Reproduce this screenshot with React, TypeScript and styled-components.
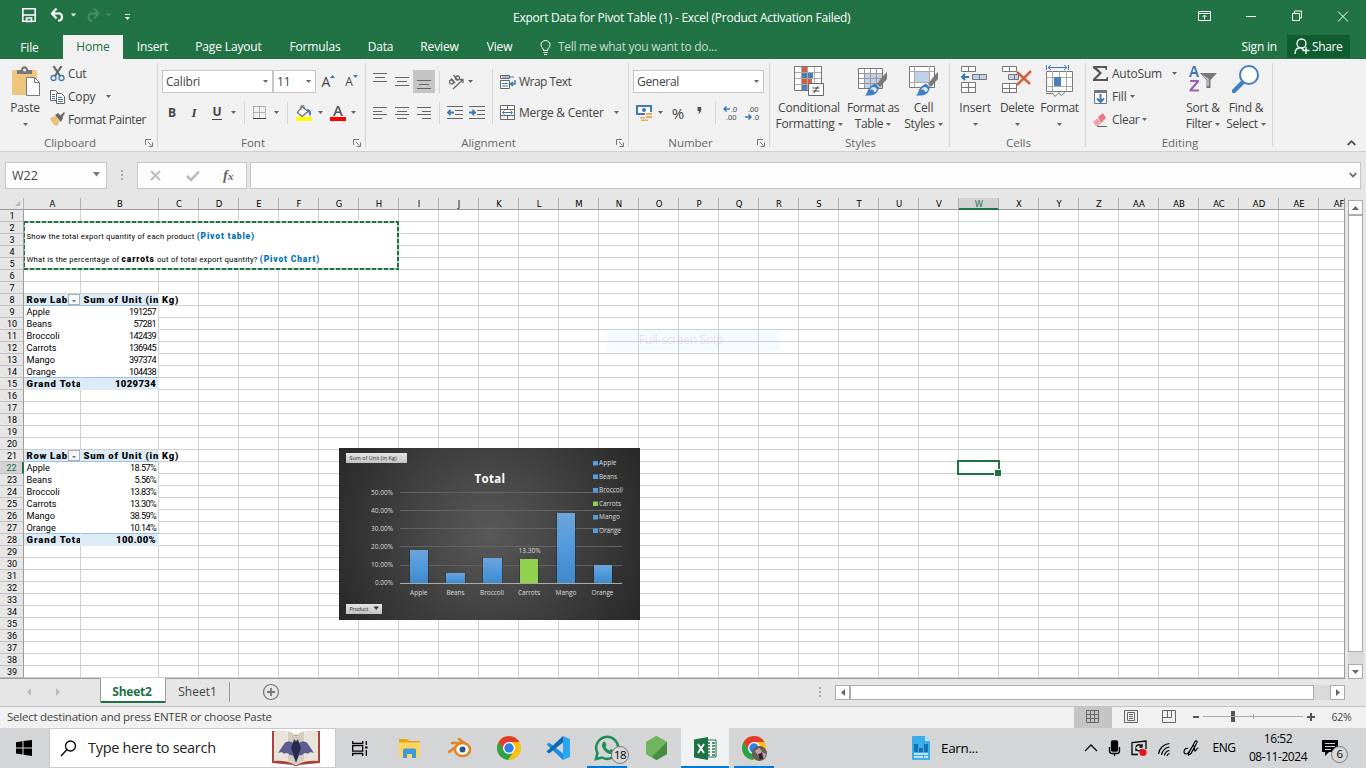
import React from "react";
import styled, { createGlobalStyle, css } from "styled-components";

const UI = '"Open Sans", "Noto Sans", sans-serif';
const CELL = 'Roboto, "Liberation Sans", sans-serif';

const GlobalStyle = createGlobalStyle`
  * { box-sizing: border-box; }
  body { margin: 0; background: #e6e6e6; font-family: ${UI}; font-size: 12px; color: #444; overflow: hidden; }
  svg { display: block; flex: none; }
`;

const Window = styled.div`
  width: 1366px;
  height: 768px;
  display: flex;
  flex-direction: column;
  overflow: hidden;
`;

const Label = styled.span<{ $l?: number; $ls?: number; $size?: number; $color?: string; $bold?: boolean; $lh?: number }>`
  margin-left: ${(p) => p.$l ?? 0}px;
  letter-spacing: ${(p) => p.$ls ?? -0.2}px;
  font-size: ${(p) => p.$size ?? 12}px;
  font-weight: ${(p) => (p.$bold ? 700 : 400)};
  ${(p) => p.$color && css`color: ${p.$color};`}
  white-space: nowrap;
  line-height: ${(p) => p.$lh ?? 16}px;
`;

const Slot = styled.div<{ $w: number; $h?: number; $l?: number; $active?: boolean }>`
  display: flex;
  flex: none;
  align-items: center;
  justify-content: center;
  width: ${(p) => p.$w}px;
  height: ${(p) => p.$h ?? 22}px;
  margin-left: ${(p) => p.$l ?? 0}px;
  background: ${(p) => (p.$active ? "#c5c5c5" : "transparent")};
`;

const Caret = ({ c = "#666" }: { c?: string }) => (
  <svg width="5" height="3"><path d="M0 0h5L2.5 3z" fill={c} /></svg>
);

/* ---------- title bar and tabs ---------- */

const TitleBar = styled.header`
  display: flex;
  align-items: center;
  height: 35px;
  flex: none;
  padding-left: 22px;
  background: #217346;
  color: #fff;
`;
const TitleText = styled.div`
  flex: 1;
  padding: 0 0 0 381px;
  font-size: 12px;
  line-height: 16px;
  letter-spacing: -0.25px;
  white-space: nowrap;
`;
const Tabs = styled.nav`
  display: flex;
  height: 24px;
  flex: none;
  background: #217346;
  color: #fff;
`;
const Tab = styled.div<{ $w: number; $on?: boolean; $low?: boolean }>`
  width: ${(p) => p.$w}px;
  height: 24px;
  line-height: ${(p) => (p.$low ? 26 : 24)}px;
  text-align: center;
  white-space: nowrap;
  letter-spacing: -0.15px;
  background: ${(p) => (p.$on ? "#f1f1f1" : "transparent")};
  color: ${(p) => (p.$on ? "#217346" : "#fff")};
`;
const TellMe = styled.div`
  display: flex;
  align-items: center;
  flex: 1;
  padding-left: 14px;
  color: #c5dccf;
`;
const ShareButton = styled.div`
  display: flex;
  align-items: center;
  width: 63px;
  height: 23px;
  margin: 0 16px 0 10px;
  padding-left: 7px;
  gap: 2px;
  background: #0e5c2f;
`;

const Title = () => (
  <TitleBar>
    <svg width="110" height="20" viewBox="22 8 110 20" fill="none">
      <path d="M22.8 8.8h12.4v12.4H22.8z" stroke="#fff" strokeWidth="1.6" />
      <path d="M23 15h12M26.5 18h5v3.500h-5z" stroke="#fff" strokeWidth="1.6" />
      <path d="M56.500 8.500l-4.500 5 4.500 5M53 13.500h7a4 4 0 0 1 0 7h-2" stroke="#fff" strokeWidth="2.200" />
      <path d="M71 13.500h5l-2.500 3z" fill="#fff" />
      <g stroke="#4b8e69"><path d="M94 8.500l4.500 5-4.500 5M98 13.500h-7.500a4 4 0 0 0 0 7h2" strokeWidth="1.800" /></g>
      <path d="M106 13.500h5l-2.500 3z" fill="#4b8e69" />
      <path d="M125 14.500h5" stroke="#fff" />
      <path d="M125 17h5l-2.500 3z" fill="#fff" />
    </svg>
    <TitleText>Export Data for Pivot Table (1) - Excel (Product Activation Failed)</TitleText>
    <svg width="168" height="20" viewBox="1198 5 168 20" fill="none" stroke="#fff">
      <path d="M1198.500 8.500h12v9h-12zM1198.500 10.500h12M1204.500 16.500v-4M1202.500 14l2-2 2 2" />
      <path d="M1246 13.500h10" />
      <path d="M1292.500 10.500h7v7h-7zM1294.500 10v-2h7v7h-2" />
      <path d="M1338 8.500l10 10M1348 8.500l-10 10" />
    </svg>
  </TitleBar>
);

const TabRow = () => (
  <Tabs>
    <Tab $w={59} $low>File</Tab>
    <Slot $w={4} />
    <Tab $w={60} $on>Home</Tab>
    <Tab $w={59}>Insert</Tab>
    <Tab $w={93}>Page Layout</Tab>
    <Tab $w={80}>Formulas</Tab>
    <Tab $w={51}>Data</Tab>
    <Tab $w={67}>Review</Tab>
    <Tab $w={53}>View</Tab>
    <TellMe>
      <svg width="11" height="15" fill="none" stroke="#fff"><path d="M3.500 10.500C3.500 8 1 7.500 1 4.800a4.500 4.300 0 0 1 9 0C10 7.500 7.500 8 7.500 10.500zM3.500 12.500h4M4 14.500h3" /></svg>
      <Label $l={7} $ls={-0.28}>Tell me what you want to do...</Label>
    </TellMe>
    <Label $lh={24} $ls={-0.2}>Sign in</Label>
    <ShareButton>
      <svg width="16" height="17" fill="none" stroke="#fff" strokeWidth="1.300"><circle cx="7.500" cy="5.500" r="4.500" /><path d="M1 16c0-3.500 2-6 5-6.500M7 10l3 2M8.500 12.500h7M12 9v7" /></svg>
      <Label $ls={-0.4}>Share</Label>
    </ShareButton>
  </Tabs>
);

/* ---------- ribbon ---------- */

const RibbonBar = styled.div`
  display: flex;
  position: relative;
  height: 93px;
  flex: none;
  padding: 4px 0;
  background: #f1f1f1;
  border-bottom: 1px solid #d2d0ce;
`;
const Group = styled.section<{ $w: number }>`
  display: flex;
  flex-direction: column;
  width: ${(p) => p.$w}px;
  height: 84px;
  flex: none;
  border-right: 1px solid #d4d4d4;
`;
const GroupBody = styled.div`
  display: flex;
  height: 71px;
  flex: none;
`;
const GroupFooter = styled.div`
  display: flex;
  align-items: center;
  height: 18px;
  padding-right: 4px;
  color: #666;
`;
const GroupName = styled.span<{ $launch: boolean }>`
  flex: 1;
  padding-right: ${(p) => (p.$launch ? 5 : 0)}px;
  padding-left: ${(p) => (p.$launch ? 0 : 6)}px;
  text-align: center;
  font-size: 11.500px;
  line-height: 17px;
`;
const Column = styled.div<{ $l?: number; $t?: number; $w?: number }>`
  display: flex;
  flex-direction: column;
  margin-left: ${(p) => p.$l ?? 0}px;
  margin-top: ${(p) => p.$t ?? 0}px;
  ${(p) => p.$w && css`width: ${p.$w}px;`}
`;
const Line = styled.div<{ $h?: number; $t?: number }>`
  display: flex;
  align-items: center;
  height: ${(p) => p.$h ?? 23}px;
  margin-top: ${(p) => p.$t ?? 0}px;
  white-space: nowrap;
`;
const BigButton = styled.div<{ $w: number; $l?: number }>`
  display: flex;
  flex-direction: column;
  align-items: center;
  width: ${(p) => p.$w}px;
  margin-left: ${(p) => p.$l ?? 0}px;
  flex: none;
  line-height: 16px;
  letter-spacing: -0.200px;
  white-space: nowrap;
`;
const BigIcon = styled.div`
  height: 37px;
  padding-top: 2px;
`;
const BigLine = styled.div<{ $ls?: number }>`
  display: flex;
  align-items: center;
  gap: 3px;
  height: 16px;
  ${(p) => p.$ls !== undefined && css`letter-spacing: ${p.$ls}px;`}
`;
const Combo = styled.div<{ $w: number }>`
  display: flex;
  align-items: center;
  justify-content: space-between;
  width: ${(p) => p.$w}px;
  height: 23px;
  padding: 0 4px 0 3px;
  background: #fff;
  border: 1px solid #c6c6c6;
  flex: none;
`;
const Sep = styled.div<{ $h?: number; $l?: number }>`
  width: 1px;
  height: ${(p) => p.$h ?? 22}px;
  margin-left: ${(p) => p.$l ?? 0}px;
  background: #d4d4d4;
  flex: none;
`;
const Collapse = styled.div`
  position: absolute;
  right: 10px;
  bottom: 5px;
`;
const Glyph = styled.span<{ $b?: boolean; $i?: boolean; $u?: boolean; $size?: number }>`
  font-size: ${(p) => p.$size ?? 12}px;
  line-height: 14px;
  font-weight: ${(p) => (p.$b ? 700 : 400)};
  font-style: ${(p) => (p.$i ? "italic" : "normal")};
  font-family: ${(p) => (p.$i ? '"Liberation Serif", serif' : UI)};
  ${(p) => p.$u && css`border-bottom: 1px solid #444;`}
`;

const Footer = ({ name, launch = true }: { name: string; launch?: boolean }) => (
  <GroupFooter>
    <GroupName $launch={launch}>{name}</GroupName>
    {launch && (
      <svg width="8" height="8" fill="none" stroke="#777"><path d="M.5 6V.5H6M3 3l3.500 3.500M7.500 3.500v4h-4" /></svg>
    )}
  </GroupFooter>
);

const Bars = ({ xs, ys, h }: { xs: [number, number][]; ys: number[]; h: number }) => (
  <svg width="14" height={h} stroke="#666">{ys.map((y, i) => <path key={i} d={`M${xs[i][0]} ${y}.5H${xs[i][1]}`} />)}</svg>
);

const IndentIcon = ({ right }: { right?: boolean }) => (
  <svg width="16" height="14" stroke="#666" fill="none">
    <path d="M0 .5h16M8 4.500h8M8 8.500h8M0 12.500h16" />
    <path d={right ? "M0 6.500h6M3.500 4l2.500 2.500L3.500 9" : "M7 6.500H1M3.500 4L1 6.500 3.500 9"} stroke="#3f78b5" strokeWidth="1.800" />
  </svg>
);

const BrushOverlay = () => (
  <>
    <path d="M29 7v7l-7 8-3-3 6-8z" fill="#7a7a7a" />
    <path d="M17 18.500l4 4-1.500 4c-3 4.500-8 4-13 4 3-1.500 2.500-4 4-6.500 1.500-3 4-4 6.500-5.500z" fill="#3f7fbf" />
    <path d="M12 25c1-3 4-4 6-2s0 4-2 4c0-2-2-3-4-2z" fill="#dce8f4" />
  </>
);

const Clipboard = () => (
  <Group $w={158}>
    <GroupBody>
      <BigButton $w={40} $l={5}>
        <BigIcon>
          <svg width="30" height="33" viewBox="-2 -1 30 33">
            <path d="M2 4h21a2 2 0 0 1 2 2v23H2a2 2 0 0 1-2-2V6a2 2 0 0 1 2-2z" fill="#edc57c" />
            <path d="M5 8V4h4c0-5 7-5 7 0h4v4z" fill="#777" /><circle cx="12.500" cy="4" r="1.500" fill="#f1f1f1" />
            <path d="M14.500 11.500h8l5 5v13h-13z" fill="#fff" stroke="#777" /><path d="M22.500 11.500v5h5" fill="none" stroke="#777" />
          </svg>
        </BigIcon>
        <BigLine>Paste</BigLine>
        <BigLine><Caret /></BigLine>
      </BigButton>
      <Column $l={5} $t={-1}>
        <Line>
          <svg width="15" height="16" fill="none"><path d="M3.500 0l6.500 10M11.500 0L5 10" stroke="#666" strokeWidth="2.200" /><circle cx="3.500" cy="12" r="2.500" stroke="#3f78b5" strokeWidth="1.300" /><circle cx="11.500" cy="12" r="2.500" stroke="#3f78b5" strokeWidth="1.300" /></svg>
          <Label $l={3} $ls={-0.3}>Cut</Label>
        </Line>
        <Line>
          <svg width="15" height="14" fill="#fff" stroke="#666"><path d="M.5.500h5l3 3v7h-8z" /><path d="M6.500 3.500h5l3 3v7h-8z" /><path d="M2 4.500h3M2 6.500h3M2 8.500h3M8 7.500h4M8 9.500h5M8 11.500h5" stroke="#3f78b5" /></svg>
          <Label $l={3}>Copy</Label><Slot $w={5} $l={11}><Caret /></Slot>
        </Line>
        <Line>
          <svg width="15" height="15"><path d="M0 6l5-2 5 5-3 5C4 13 1 10 0 6z" fill="#edbf77" /><path d="M5 3l3-2 5 5-2 4z" fill="#666" /><path d="M10 4l4-4 1 1-3 5z" fill="#666" /></svg>
          <Label $l={3} $ls={-0.4}>Format Painter</Label>
        </Line>
      </Column>
    </GroupBody>
    <Footer name="Clipboard" />
  </Group>
);

const FontGroup = () => (
  <Group $w={208}>
    <GroupBody>
      <Column $l={4} $t={7}>
        <Line>
          <Combo $w={111}><Label>Calibri</Label><Caret /></Combo>
          <Combo $w={43}><Label>11</Label><Caret /></Combo>
          <Slot $w={20} $l={3}><Glyph $size={14}>A</Glyph><svg width="6" height="16"><path d="M0 4h5L2.500 1z" fill="#3f78b5" /></svg></Slot>
          <Slot $w={20} $l={3}><Glyph $size={12}>A</Glyph><svg width="6" height="16"><path d="M0 1h5L2.500 4z" fill="#3f78b5" /></svg></Slot>
        </Line>
        <Line $t={8}>
          <Slot $w={20}><Glyph $b>B</Glyph></Slot>
          <Slot $w={24}><Glyph $b $i $size={13}>I</Glyph></Slot>
          <Slot $w={22}><Glyph $b $u>U</Glyph></Slot>
          <Slot $w={10}><Caret /></Slot>
          <Sep $l={6} />
          <Slot $w={13} $l={8}><svg width="13" height="14" stroke="#777" fill="none"><path d="M.5.500h12v12M.500.500v12M6.500.500v12M.5 6.500h12" strokeDasharray="1 1" /><path d="M0 12.500h13" stroke="#444" /></svg></Slot>
          <Slot $w={20}><Caret /></Slot>
          <Sep $l={1} />
          <Slot $w={16} $l={8}><svg width="16" height="16"><path d="M6 1.500l6 5-6 5-4.500-4z" fill="#fff" stroke="#666" strokeWidth="1.200" /><path d="M5 5V1.500a1.500 1.500 0 0 1 3 0V4" fill="none" stroke="#666" /><path d="M11 4c4 0 5 4 3 7.500-1-2-1-4-3-7.500z" fill="#3f78b5" /><path d="M0 12h16v4H0z" fill="#ff0" /></svg></Slot>
          <Slot $w={16}><Caret /></Slot>
          <Slot $w={16} $l={2}><svg width="16" height="16"><path d="M3 11L7 1h2l4 10h-2l-1-3H6l-1 3zM6.500 6.500h3L8 2.500z" fill="#555" /><path d="M0 12h16v4H0z" fill="red" /></svg></Slot>
          <Slot $w={15}><Caret /></Slot>
        </Line>
      </Column>
    </GroupBody>
    <Footer name="Font" />
  </Group>
);

const AlignmentGroup = () => (
  <Group $w={263}>
    <GroupBody>
      <Column $l={3} $t={7}>
        <Line>
          <Slot $w={22}><Bars h={18} ys={[0, 4, 8]} xs={[[0, 14], [2, 12], [0, 14]]} /></Slot>
          <Slot $w={22}><Bars h={14} ys={[2, 6, 10]} xs={[[0, 14], [2, 12], [0, 14]]} /></Slot>
          <Slot $w={22} $h={23} $active><Bars h={14} ys={[5, 9, 13]} xs={[[0, 14], [2, 12], [0, 14]]} /></Slot>
          <Sep $l={4} />
          <Slot $w={16} $l={8}><svg width="17" height="16" stroke="#666" fill="none" strokeWidth="1.300"><circle cx="3.500" cy="8" r="2" /><path d="M3 4.500l4 4.500M5.500 1l4 5" /><circle cx="9.500" cy="4" r="2" /><path d="M5 15L15 5.500M11.500 5.500H15v3.500" /></svg></Slot>
          <Slot $w={12}><Caret /></Slot>
          <Slot $w={2} />
        </Line>
        <Line $t={8}>
          <Slot $w={22}><Bars h={12} ys={[0, 4, 7, 11]} xs={[[0, 14], [0, 9], [0, 14], [0, 9]]} /></Slot>
          <Slot $w={22}><Bars h={12} ys={[0, 4, 7, 11]} xs={[[0, 14], [2, 12], [0, 14], [2, 12]]} /></Slot>
          <Slot $w={22}><Bars h={12} ys={[0, 4, 7, 11]} xs={[[0, 14], [5, 14], [0, 14], [5, 14]]} /></Slot>
          <Sep $l={4} />
          <Slot $w={16} $l={7}><IndentIcon /></Slot>
          <Slot $w={16} $l={6}><IndentIcon right /></Slot>
        </Line>
      </Column>
      <Column $l={7} $t={6}><Sep $h={55} /></Column>
      <Column $l={7} $t={7}>
        <Line>
          <svg width="16" height="16" fill="#fff" stroke="#666"><path d="M.5 1.500h9v3h-9zM.5 6.500h9v8h-9z" /><path d="M2 3h12M2 9.500h6M2 12h6" stroke="#3f78b5" /><path d="M15 6v4h-4M13 8l-2.500 2 2.500 2" stroke="#3f78b5" fill="none" strokeWidth="1.500" /></svg>
          <Label $l={3} $ls={-0.52}>Wrap Text</Label>
        </Line>
        <Line $t={8}>
          <svg width="15" height="15" fill="#fff" stroke="#666"><path d="M.5.500h14v14H.500zM7.500.500v4M7.500 11v4M.5 4.500h14M.5 10.500h14" /><path d="M2.500 7.500h10M4.500 5.500l-2 2 2 2M10.500 5.500l2 2-2 2" stroke="#3f78b5" fill="none" /></svg>
          <Label $l={4} $ls={-0.25}>Merge &amp; Center</Label><Slot $w={5} $l={10}><Caret /></Slot>
        </Line>
      </Column>
    </GroupBody>
    <Footer name="Alignment" />
  </Group>
);

const DecimalIcon = ({ more }: { more?: boolean }) => (
  <svg width="16" height="16" fill="#444" fontFamily="Liberation Sans" fontSize="7.500">
    <text x={more ? 8 : 3} y="6.500">{more ? ".0" : ".00"}</text>
    <text x={more ? 3 : 8} y="15">{more ? ".00" : ".0"}</text>
    <path d={more ? "M7 4H1M3.500 1.500L1 4l2.500 2.500" : "M0 12h6M3.500 9.500L6 12l-2.500 2.500"} stroke="#3f78b5" strokeWidth="1.500" fill="none" />
  </svg>
);

const NumberGroup = () => (
  <Group $w={141}>
    <GroupBody>
      <Column $l={4} $t={7}>
        <Line><Combo $w={131}><Label $ls={-0.3}>General</Label><Caret /></Combo></Line>
        <Line $t={8}>
          <Slot $w={16} $l={3}><svg width="16" height="16"><path d="M1 1h14v8H1z" fill="#fff" stroke="#3f78b5" strokeWidth="2" /><circle cx="8" cy="5" r="2" fill="#3f78b5" /><path d="M9 7h7v9H8v-2H4v-3h5z" fill="#f1f1f1" /><path d="M10 8h6v2h-6zM10 11h6v2h-6zM4 12h5v1.500H4zM5 14.500h7V16H5z" fill="#e8ae5d" /></svg></Slot>
          <Slot $w={16}><Caret /></Slot>
          <Slot $w={20}><Glyph $size={15}>%</Glyph></Slot>
          <Slot $w={20} $l={1}><svg width="5" height="11"><path d="M.5 0h3.500c1 3 0 6-3 7.500C2 6 2 5 2 4H.500z" fill="#555" /></svg></Slot>
          <Sep $l={6} />
          <Slot $w={16} $l={7}><DecimalIcon more /></Slot>
          <Slot $w={16} $l={6}><DecimalIcon /></Slot>
        </Line>
      </Column>
    </GroupBody>
    <Footer name="Number" />
  </Group>
);

const StylesGroup = () => (
  <Group $w={180}>
    <GroupBody>
      <BigButton $w={72} $l={3}>
        <BigIcon>
          <svg width="30" height="31" fill="none"><path d="M.5 1.500h27v24H.500z" fill="#fff" /><path d="M8 1h6v6H8zM8 14h10v5H8z" fill="#d65f3e" /><path d="M8 7h11v6H8zM8 20h5v5H8z" fill="#4a80ba" /><path d="M.5 7.500h27M.5 13.500h27M.5 19.500h27M7.500 1v24M13.500 1v24M20.500 1v24" stroke="#aaa" /><path d="M.5 1.500h27v24H.500z" stroke="#777" /><path d="M14.500 18.500h15v12h-15z" fill="#fff" stroke="#666" /><path d="M18.500 23h7M18.500 26h7M24 21l-4 7" stroke="#444" /></svg>
        </BigIcon>
        <BigLine>Conditional</BigLine>
        <BigLine $ls={-0.25}>Formatting<Caret /></BigLine>
      </BigButton>
      <BigButton $w={56}>
        <BigIcon>
          <svg width="30" height="31" viewBox="0 0 30 31" fill="none"><path d="M.5 3.500h24v20H.500z" fill="#fff" /><path d="M7 8h17v15H7z" fill="#bed1e8" /><path d="M.5 8.500h24M.5 13.500h24M.5 18.500h24M6.500 3v20M12.500 3v20M18.500 3v20" stroke="#999" /><path d="M.5 3.500h24v20H.500z" stroke="#777" /><BrushOverlay /></svg>
        </BigIcon>
        <BigLine $ls={-0.42}>Format as</BigLine>
        <BigLine $ls={-0.4}>Table<Caret /></BigLine>
      </BigButton>
      <BigButton $w={45}>
        <BigIcon>
          <svg width="30" height="31" viewBox="0 0 30 31" fill="none"><path d="M.5 1.500h25v21H.500z" fill="#fff" stroke="#777" /><path d="M.5 6.500h25M.5 17.500h25M5.500 1v21M20.500 1v21" stroke="#aaa" /><path d="M6 7h14v10H6z" fill="#bed1e8" /><BrushOverlay /></svg>
        </BigIcon>
        <BigLine>Cell</BigLine>
        <BigLine $ls={-0.35}>Styles<Caret /></BigLine>
      </BigButton>
    </GroupBody>
    <Footer name="Styles" launch={false} />
  </Group>
);

const CellsGroup = () => (
  <Group $w={136}>
    <GroupBody>
      <BigButton $w={42} $l={4}>
        <BigIcon><svg width="28" height="29" fill="#fff" stroke="#777"><path d="M.500 1.500h14v5h-14zM7.500 1v6M.500 17.500h14v10h-14zM7.500 17v11M.500 22.500h14" /><path d="M11.500 9.500h14v5h-14zM18.500 9v6" fill="#bed1e8" /><path d="M8 12H1M4 9l-3 3 3 3" fill="none" stroke="#3f78b5" strokeWidth="2" /></svg></BigIcon>
        <BigLine $ls={-0.1}>Insert</BigLine><BigLine><Caret /></BigLine>
      </BigButton>
      <BigButton $w={42}>
        <BigIcon><svg width="30" height="29" fill="#fff" stroke="#777"><path d="M.5 1.500h14v5h-14zM7.500 1v6M.5 18.500h14v9h-14zM7.500 18v10M.5 23.500h14" /><path d="M6.500 9.500h10v5h-10zM12.500 9v6" fill="#bed1e8" /><path d="M15 7l13 12M29 6L15 20" fill="none" stroke="#d65f3e" strokeWidth="2.500" /></svg></BigIcon>
        <BigLine $ls={-0.35}>Delete</BigLine><BigLine><Caret /></BigLine>
      </BigButton>
      <BigButton $w={43}>
        <BigIcon><svg width="29" height="32" fill="#fff" stroke="#777"><path d="M1.500 6.500h26v20h-26z" /><path d="M7.500 6v20M21.500 6v20M1.500 12.500h26M1.500 21.500h26M14.500 6v6" stroke="#aaa" /><path d="M9 12h7v9H9z" fill="#4a80ba" stroke="none" /><path d="M1 28.500h7l2 3 4-4 2 3 4-3" /><path d="M1.500 0v5M23.500 0v5M3 2.500h19M6 0L3 2.500 6 5M19 0l3 2.500L19 5" stroke="#3f78b5" fill="none" /></svg></BigIcon>
        <BigLine $ls={-0.35}>Format</BigLine><BigLine><Caret /></BigLine>
      </BigButton>
    </GroupBody>
    <Footer name="Cells" launch={false} />
  </Group>
);

const EditingGroup = () => (
  <Group $w={187}>
    <GroupBody>
      <Column $l={7} $t={-1} $w={86}>
        <Line><svg width="15" height="15"><path d="M0 0h14v4h-1l-1-2H4l5 5-6 6h10l1-2h1v4H0v-2l6-6-6-5z" fill="#555" /></svg><Label $l={4} $ls={-0.22}>AutoSum</Label><Slot $w={5} $l={10}><Caret /></Slot></Line>
        <Line><svg width="15" height="16"><path d="M1.500 1.500h12v13h-12z" fill="#fff" stroke="#777" /><path d="M1 1h13v3H1z" fill="#777" /><path d="M7.500 5v8M4 9.500L7.500 13 11 9.500" fill="none" stroke="#3f78b5" strokeWidth="2" /></svg><Label $l={4}>Fill</Label><Slot $w={5} $l={4}><Caret /></Slot></Line>
        <Line><svg width="15" height="14"><path d="M5 4l5-4 3 5-5 5z" fill="#e8788a" /><path d="M4.500 5L0 9l3 4h2l3-3z" fill="#f0a3ae" /><path d="M4 13.500h10" stroke="#666" /></svg><Label $l={4} $ls={-0.3}>Clear</Label><Slot $w={5} $l={3}><Caret /></Slot></Line>
      </Column>
      <BigButton $w={44} $l={2}>
        <BigIcon><svg width="30" height="29"><path d="M1 12L5 1h2.500L11 12H9L8 9H4l-1 3zM4.500 7h3L6 2.800z" fill="#3f78b5" /><path d="M2 15h9v2l-6.500 7.500H11v2H1.500v-2L8 17H2z" fill="#9a63b8" /><path d="M12 8h17l-6.500 7v8h-4v-8z" fill="#777" /><path d="M14 9.500l5.500 5V21h1v-7z" fill="#eee" /></svg></BigIcon>
        <BigLine>Sort &amp;</BigLine><BigLine $ls={-0.3}>Filter<Caret /></BigLine>
      </BigButton>
      <BigButton $w={42}>
        <BigIcon><svg width="28" height="28"><path d="M2 26l9-9" stroke="#3f7fbf" strokeWidth="4.500" strokeLinecap="round" /><circle cx="17" cy="10" r="9" fill="#fff" stroke="#3f7fbf" strokeWidth="2" /></svg></BigIcon>
        <BigLine>Find &amp;</BigLine><BigLine $ls={-0.3}>Select<Caret /></BigLine>
      </BigButton>
    </GroupBody>
    <Footer name="Editing" launch={false} />
  </Group>
);

/* ---------- formula bar ---------- */

const FormulaBar = styled.div`
  display: flex;
  height: 46px;
  flex: none;
  padding: 10px 5px 9px;
`;
const Field = styled.div<{ $w?: number; $l?: number; $r?: number }>`
  display: flex;
  align-items: center;
  justify-content: space-between;
  ${(p) => (p.$w ? css`width: ${p.$w}px;` : css`flex: 1;`)}
  height: 27px;
  margin-left: ${(p) => p.$l ?? 0}px;
  padding: 0 ${(p) => p.$r ?? 6}px 0 6px;
  background: #fdfdfd;
  border: 1px solid #c6c6c6;
`;

/* ---------- worksheet ---------- */

const SheetArea = styled.div`
  display: flex;
  height: 481px;
  flex: none;
`;
const Sheet = styled.div`
  position: relative;
  width: 1345px;
  height: 481px;
  overflow: hidden;
  border-right: 1px solid #9b9b9b;
  border-bottom: 1px solid #9b9b9b;
  font-family: ${CELL};
  color: #000;
`;
const SheetRow = styled.div`
  display: flex;
  height: 12px;
  width: 1400px;
`;
const Corner = styled.div`
  width: 24px;
  flex: none;
  display: flex;
  align-items: flex-end;
  justify-content: flex-end;
  padding: 0 3px 3px 0;
  border-right: 1px solid #b5b5b5;
  border-bottom: 1px solid #9b9b9b;
`;
const ColHead = styled.div<{ $w: number; $on?: boolean }>`
  width: ${(p) => p.$w}px;
  flex: none;
  padding-left: 1px;
  font: 8.500px/12px "DejaVu Sans", sans-serif;
  text-align: center;
  border-right: 1px solid #b0b0b0;
  border-bottom: ${(p) => (p.$on ? "2px solid #217346" : "1px solid #9b9b9b")};
  background: ${(p) => (p.$on ? "#d2d2d2" : "transparent")};
  color: ${(p) => (p.$on ? "#217346" : "#000")};
`;
const RowHead = styled.div<{ $on?: boolean }>`
  width: 24px;
  flex: none;
  padding-left: 1px;
  font-size: 9px;
  line-height: 12px;
  text-align: center;
  border-right: ${(p) => (p.$on ? "2px solid #217346" : "1px solid #9b9b9b")};
  border-bottom: 1px solid #c0c0c0;
  background: ${(p) => (p.$on ? "#d2d2d2" : "transparent")};
  color: ${(p) => (p.$on ? "#217346" : "#000")};
`;
type Kind = "plain" | "data" | "head" | "total" | "last";
const Cell = styled.div<{ $w: number; $kind: Kind; $first?: boolean; $right?: boolean }>`
  position: relative;
  display: flex;
  justify-content: ${(p) => (p.$right ? "flex-end" : "flex-start")};
  width: ${(p) => p.$w}px;
  flex: none;
  padding: 0 ${(p) => (p.$right ? 2 : 0)}px 0 2.500px;
  font-size: 9.200px;
  line-height: 12px;
  white-space: nowrap;
  background: #fff;
  border-right: 1px solid #d0d0d0;
  border-bottom: 1px solid #d0d0d0;
  ${(p) => p.$kind !== "plain" && css`border-right-color: ${p.$first ? "#fff" : "#d0d0d0"}; border-bottom-color: #fff;`}
  ${(p) => p.$kind === "last" && css`border-bottom-color: #9bc2e6;`}
  ${(p) => (p.$kind === "head" || p.$kind === "total") && css`
    background: #ddebf7;
    border-right-color: #ddebf7;
    border-bottom-color: ${p.$kind === "head" ? "#9bc2e6" : "#ddebf7"};
    font-weight: 900;
    font-size: 9.500px;
  `}
  ${(p) => (p.$kind === "total" || (p.$kind !== "head" && p.$first)) && css`overflow: hidden;`}
  ${(p) => p.$kind === "head" && !p.$first && css`z-index: 1;`}
`;
const CellText = styled.span<{ $ls: number }>`
  letter-spacing: ${(p) => p.$ls}px;
`;
const FilterButton = styled.div`
  position: absolute;
  right: 0;
  top: 0;
  z-index: 2;
  display: flex;
  align-items: center;
  justify-content: center;
  width: 12px;
  height: 11px;
  padding-top: 3px;
  background: #f6f8fa;
  border: 1px solid #a8b0bb;
`;

const pivot = (start: number, vals: string[]): Record<number, [string, string, Kind]> => {
  const names = ["Row Labels", "Apple", "Beans", "Broccoli", "Carrots", "Mango", "Orange", "Grand Total"];
  const out: Record<number, [string, string, Kind]> = {};
  names.forEach((n, i) => {
    out[start + i] = [n, vals[i], i === 0 ? "head" : i === 7 ? "total" : i === 6 ? "last" : "data"];
  });
  return out;
};
const PIVOTS = {
  ...pivot(8, ["Sum of Unit (in Kg)", "191257", "57281", "142439", "136945", "397374", "104438", "1029734"]),
  ...pivot(21, ["Sum of Unit (in Kg)", "18.57%", "5.56%", "13.83%", "13.30%", "38.59%", "10.14%", "100.00%"]),
};
const COLS = "A B C D E F G H I J K L M N O P Q R S T U V W X Y Z AA AB AC AD AE AF".split(" ");
const widthOf = (i: number) => (i === 0 ? 57 : i === 1 ? 78 : 40);
const ROWS = Array.from({ length: 39 }, (_, i) => i + 1);

const Question = styled.div`
  position: absolute;
  left: 24px;
  top: 23px;
  width: 375px;
  height: 49px;
  padding: 10px 2.500px 0;
  font-size: 7.700px;
  line-height: 10px;
  white-space: nowrap;
  background:
    repeating-linear-gradient(90deg, #217346 0 4px, #a6cdb6 4px 6px) 0 0 / 100% 2px no-repeat,
    repeating-linear-gradient(90deg, #217346 0 4px, #a6cdb6 4px 6px) 0 100% / 100% 2px no-repeat,
    repeating-linear-gradient(#217346 0 4px, #a6cdb6 4px 6px) 0 0 / 1px 100% no-repeat,
    repeating-linear-gradient(#217346 0 4px, #a6cdb6 4px 6px) 100% 0 / 2px 100% no-repeat,
    #fff;
`;
const QuestionLine = styled.p`
  margin: 0 0 12px;
  letter-spacing: 0.220px;
`;
const Strong = styled.b<{ $blue?: boolean }>`
  font-weight: 900;
  font-size: 8.500px;
  letter-spacing: 0.850px;
  color: ${(p) => (p.$blue ? "#0070c0" : "#000")};
`;
const Selection = styled.div`
  position: absolute;
  left: 957px;
  top: 262px;
  width: 43px;
  height: 15px;
  border: 2px solid #217346;
  &::after {
    content: "";
    position: absolute;
    right: -3px;
    bottom: -3px;
    width: 6px;
    height: 6px;
    background: #217346;
    border: solid #fff;
    border-width: 1px 0 0 1px;
  }
`;
const SnipHint = styled.div`
  position: absolute;
  left: 607px;
  top: 131px;
  width: 173px;
  height: 22px;
  padding-left: 32px;
  font: 12px/22px ${UI};
  letter-spacing: -0.250px;
  color: rgba(200, 130, 130, 0.22);
  background: rgba(190, 225, 250, 0.16);
`;
const ChartBox = styled.div`
  position: absolute;
  left: 339px;
  top: 250px;
  width: 301px;
  height: 172px;
`;

const BARS: [string, number, number, number, number, number][] = [
  ["Apple", 410, 18, 550, 410, 17.5],
  ["Beans", 446, 19, 573, 446.5, 18],
  ["Broccoli", 483, 19, 558, 480, 24],
  ["Carrots", 520, 18, 559, 518, 22],
  ["Mango", 557, 18, 513, 555.5, 21],
  ["Orange", 594, 18, 565, 591.5, 22],
];

const Chart = () => (
  <ChartBox>
    <svg width="301" height="172" viewBox="339 448 301 172" fontFamily="Open Sans" fontSize="6.500" fill="#dcdcdc">
      <defs>
        <radialGradient id="bg" gradientUnits="userSpaceOnUse" cx="489" cy="534" r="172"><stop offset="0" stopColor="#595959" /><stop offset="1" stopColor="#282828" /></radialGradient>
        <linearGradient id="bar" x1="0" y1="0" x2="0" y2="1"><stop offset="0" stopColor="#6ea4dc" /><stop offset=".5" stopColor="#5099dc" /><stop offset="1" stopColor="#3f8acb" /></linearGradient>
        <linearGradient id="btn" x1="0" y1="0" x2="0" y2="1"><stop offset="0" stopColor="#e4e4e4" /><stop offset="1" stopColor="#c4c4c4" /></linearGradient>
      </defs>
      <path d="M339 448h301v172H339z" fill="url(#bg)" />
      {[0, 1, 2, 3, 4, 5].map((i) => (
        <g key={i}>
          <path d={`M400 ${Math.round(492 + i * 18.15) + 0.5}h222`} stroke={i === 5 ? "#aaa" : "#636363"} />
          <text x={i === 5 ? 375 : 371} y={495 + i * 18} textLength={i === 5 ? 18 : 22}>{`${50 - i * 10 || 0}.00%`}</text>
        </g>
      ))}
      {BARS.map(([n, x, w, y, tx, tl], i) => (
        <g key={n}>
          <rect x={x - 1} y={y} width={w + 2} height={583 - y} fill="#000" opacity=".2" />
          <rect x={x} y={y} width={w} height={583 - y} fill={n === "Carrots" ? "#92d050" : "url(#bar)"} />
          <text x={tx} y="595" textLength={tl}>{n}</text>
          <rect x="593" y={461 + i * 13.5} width="5" height="4.500" fill={n === "Carrots" ? "#92d050" : "#5a9bdb"} />
          <text x="599" y={465.3 + i * 13.5} textLength={tl}>{n}</text>
        </g>
      ))}
      <text x="518.500" y="553" textLength="22">13.30%</text>
      <text x="474.500" y="483" textLength="30.500" fontSize="11.500" fontWeight="700" fill="#fff">Total</text>
      <rect x="346" y="453" width="61" height="10" fill="url(#btn)" />
      <text x="349.500" y="460" textLength="47" fontSize="5.500" fill="#333">Sum of Unit (in Kg)</text>
      <rect x="346" y="604" width="36" height="10" fill="url(#btn)" />
      <text x="349.500" y="611" textLength="19" fontSize="5.500" fill="#333">Product</text>
      <path d="M373.500 606.500h5.500l-2.700 3.500z" fill="#333" />
    </svg>
  </ChartBox>
);

const VScroll = styled.div`
  display: flex;
  flex-direction: column;
  width: 16px;
  margin: 2px 0 0 3px;
  height: 479px;
`;
const ScrollBtn = styled.div`
  display: flex;
  align-items: center;
  justify-content: center;
  width: 15px;
  height: 15px;
  flex: none;
  background: #fff;
  border: 1px solid #ababab;
`;
const VThumb = styled.div`
  width: 15px;
  height: 437px;
  flex: none;
  background: #fff;
  border: 1px solid #ababab;
`;
const Track = styled.div`
  flex: 1;
  background: #dadada;
`;

/* ---------- sheet tabs and status bar ---------- */

const SheetTabs = styled.div`
  display: flex;
  height: 28px;
  flex: none;
  border-bottom: 1px solid #c2c2c2;
`;
const ActiveSheet = styled.div`
  width: 66px;
  height: 25px;
  margin-top: -1px;
  padding-right: 2px;
  line-height: 27px;
  text-align: center;
  font-weight: 700;
  letter-spacing: -0.200px;
  color: #217346;
  background: #fff;
  border: solid #9b9b9b;
  border-width: 0 1px 0 1px;
  box-shadow: inset 0 -2px #217346;
  position: relative;
`;
const OtherSheet = styled.div`
  width: 64px;
  height: 20px;
  margin-top: 3px;
  line-height: 20px;
  text-align: center;
  border-right: 1px solid #9b9b9b;
`;
const HScroll = styled.div`
  display: flex;
  width: 510px;
  margin: 6px 0 0 13px;
  height: 15px;
`;
const HThumb = styled.div`
  width: 464px;
  background: #fff;
  border: 1px solid #ababab;
`;
const StatusBar = styled.div`
  display: flex;
  align-items: center;
  height: 21px;
  flex: none;
  background: #f1f1f1;
`;
const StatusText = styled.div`
  flex: 1;
  padding: 0 0 2px 7px;
  font-size: 11.500px;
  letter-spacing: -0.240px;
  line-height: 18px;
`;

/* ---------- taskbar ---------- */

const Taskbar = styled.footer`
  display: flex;
  height: 40px;
  flex: none;
  background: #d4d5d7;
  color: #000;
`;
const Search = styled.div`
  display: flex;
  align-items: center;
  width: 287px;
  padding-left: 10px;
  background: #fff;
  border: 1px solid #c8c8c8;
  font-size: 15px;
`;
const TaskItem = styled.div<{ $w: number; $l?: number; $open?: number; $active?: boolean }>`
  display: flex;
  position: relative;
  align-items: center;
  justify-content: center;
  width: ${(p) => p.$w}px;
  margin-left: ${(p) => p.$l ?? 0}px;
  flex: none;
  background: ${(p) => (p.$active ? "#f0f1f2" : "transparent")};
  ${(p) => p.$open && css`
    &::after {
      content: "";
      position: absolute;
      left: ${(p.$w - p.$open) / 2}px;
      bottom: 0;
      width: ${p.$open}px;
      height: 2px;
      background: #0078d7;
    }
  `}
`;
const Badge = styled.div<{ $x: number; $y: number; $s: number }>`
  position: absolute;
  left: ${(p) => p.$x}px;
  top: ${(p) => p.$y}px;
  width: ${(p) => p.$s}px;
  height: ${(p) => p.$s}px;
  line-height: ${(p) => p.$s - 3}px;
  border-radius: 50%;
  border: 1px solid #777;
  background: #d8d9db;
  text-align: center;
  font-size: 11.500px;
  letter-spacing: -0.600px;
`;
const BookArt = styled.svg`
  margin-left: 56px;
`;
const Clock = styled.div`
  width: 74px;
  margin-left: 4px;
  padding-top: 2px;
  text-align: center;
  font-size: 12px;
  line-height: 18px;
  letter-spacing: -0.450px;
`;
const Bubble = styled.svg`
  margin-right: 8px;
`;

const Chrome = ({ avatar }: { avatar?: boolean }) => (
  <svg width="26" height="26" viewBox="-13 -13 26 26">
    <circle r="12" fill="#fbc116" />
    <path d="M-10.400-6A12 12 0 0 1 10.400-6H0L-5 3z" fill="#e33b2e" />
    <path d="M-10.400-6A12 12 0 0 0-1 12L5 3-5 3z" fill="#2ba24c" />
    <circle r="6" fill="#fff" /><circle r="4.700" fill="#2f7de9" />
    {avatar && <g><circle cx="5.500" cy="5.500" r="7.500" fill="#6b5a55" /><path d="M1 3l4-3 3 3-3 6zM8 4l4 2-2 5z" fill="#b9aaa5" /><path d="M4 6l2 6 3-2-1-5z" fill="#2c2424" /></g>}
  </svg>
);

const TaskbarView = () => (
  <Taskbar>
    <TaskItem $w={48}><svg width="16" height="16"><path d="M0 2.300L6.500 1.300V7.500H0zM7.500 1.100L16 0v7.500H7.500zM0 8.500h6.500v6L0 13.500zM7.500 8.500H16V16l-8.500-1.300z" /></svg></TaskItem>
    <Slot $w={1} />
    <Search>
      <svg width="17" height="17" fill="none" stroke="#000" strokeWidth="1.300"><circle cx="10.500" cy="6" r="5" /><path d="M7 9.500L1 16" /></svg>
      <Label $l={11} $size={14.5} $ls={-0.3} $color="#222">Type here to search</Label>
      <BookArt width="48" height="37" viewBox="0 0 48 37">
        <path d="M0 1h2l22 4L46 1h2v32l-21 2-3 1.500-3-1.500L0 33z" fill="#a5473e" />
        <path d="M2 1.500c8-2 17-1 22 5 5-6 14-7 22-5v29.500c-8-.500-16 0-22 4.500-6-4.500-14-5-22-4.500z" fill="#e9e4da" />
        <path d="M16 1.500q6 1 8 5v28q-3-3-8-4zM32 1.500q-6 1-8 5v28q3-3 8-4z" fill="#d3ccbf" />
        <path d="M22 9l2 2 2-2 1 4c3-2 7-2 9 1l6 9c-3-1.500-5-1-6 1-2-2-5-1-6 1.500-2-1-3 0-4 1.500l-2 6-2-6c-1-1.500-2-2.500-4-1.500-1-2.500-4-3.500-6-1.500-1-2-3-2.500-6-1l6-9c2-3 6-3 9-1z" fill="#5d5d94" />
        <path d="M22 10l2 2 2-2 3 8-2 5-1 4-2 5-2-5-1-4-2-5z" fill="#292950" />
      </BookArt>
    </Search>
    <TaskItem $w={48}><svg width="16" height="15" fill="none" stroke="#000" strokeWidth="1.300"><path d="M.7 0v2.500h10V0M.7 15v-2.500h10V15M.7 4.700h10v5.500H.700zM14.300 0v4M14.300 9v6" /><path d="M13 5.500h2.600v2H13z" fill="#000" stroke="none" /></svg></TaskItem>
    <TaskItem $w={52}><svg width="22" height="19"><path d="M0 0h8l2 2h11v16H0z" fill="#e5a50f" /><path d="M0 3.500h21V18H0z" fill="#fcd462" /><path d="M4 19v-8q0-1.500 1.500-1.500h10Q17 9.500 17 11v8h-4v-4H8v4z" fill="#3e9ad6" /></svg></TaskItem>
    <TaskItem $w={48}><svg width="24" height="20" fill="none"><path d="M1 14l12-9H4M11 1l8 6" stroke="#e8821e" strokeWidth="2.500" strokeLinecap="round" strokeLinejoin="round" /><ellipse cx="14.500" cy="11.500" rx="7.500" ry="6.500" fill="#fff" stroke="#e8821e" strokeWidth="2.500" /><circle cx="14.500" cy="11.500" r="3" fill="#265787" /></svg></TaskItem>
    <TaskItem $w={50}><Chrome /></TaskItem>
    <TaskItem $w={48}><svg width="24" height="24"><path d="M17 17.500L3 6.500.500 8.500 17 24z" fill="#1c8fe0" /><path d="M17 6.500L3 17.500.500 15.500 17 0z" fill="#0a6ab6" /><path d="M17 0l7 3v18l-7 3z" fill="#2ba6f0" /></svg></TaskItem>
    <TaskItem $w={50} $open={40}>
      <svg width="26" height="26" fill="none"><path d="M2 24l1.500-6A11 11 0 1 1 8 22.500z" stroke="#1c8d53" strokeWidth="2.500" /><path d="M9 7l2-.5 1.500 3.500-1 1.500c1 2 2 3 4 4l1.500-1.500 3.500 1.500c0 3-3 4-5 3.500C11 17.500 8 13 8 10z" fill="#1c8d53" /></svg>
      <Badge $x={29} $y={18} $s={18}>18</Badge>
    </TaskItem>
    <TaskItem $w={48}><svg width="21" height="24"><path d="M10.500 0L21 6v12l-10.500 6L0 18V6z" fill="#5a9e4b" /><path d="M10.500 0L21 6 5 20.500 0 18V6z" fill="#72b55f" /><path d="M21 6v12l-10.500 6-4-2.500z" fill="#468c40" /></svg></TaskItem>
    <Slot $w={1} />
    <TaskItem $w={48} $open={48} $active>
      <svg width="23" height="23"><path d="M12 3h10v17H12z" fill="#fff" stroke="#1f7244" /><path d="M13 6h3M18 6h3M13 9h3M18 9h3M13 12h3M18 12h3M13 15h3M18 15h3M13 18h3M18 18h3" stroke="#1f7244" strokeWidth="1.400" /><path d="M0 2.500L14 0v23L0 20.500z" fill="#1f7244" /><path d="M4 7l6 9M10 7l-6 9" stroke="#fff" strokeWidth="1.800" /></svg>
    </TaskItem>
    <TaskItem $w={50} $open={40}><Chrome avatar /></TaskItem>
    <TaskItem $w={24} $l={130}><svg width="18" height="24"><path d="M1 0h12l5 5v19H1Q0 24 0 23V1Q0 0 1 0z" fill="#39aee9" /><path d="M13 0l5 5h-5z" fill="#c3e6f8" /><path d="M2 8h4v8H2zM7 12h4v4H7zM12 8h4v8h-4z" fill="#1673b5" /><path d="M2 18h14M2 21h9M12 21h4" stroke="#e5f5fd" strokeWidth="1.500" /></svg></TaskItem>
    <TaskItem $w={53}><Label $size={13.5} $ls={-0.35}>Earn...</Label></TaskItem>
    <Slot $w={5} />
    <svg width="220" height="40" viewBox="991 728 220 40" fill="none" stroke="#000" strokeWidth="1.300">
      <path d="M1085 751l6-6 6 6" />
      <rect x="1111.500" y="741" width="6" height="10" rx="1" fill="#000" /><path d="M1109.500 747v4q0 2.500 2.500 2.500h5q2.500 0 2.500-2.500v-4M1114.500 753v3" />
      <path d="M1138 754.500H1132v-12l14-1.500v8M1136 747c1-3 5-3 6 0M1142 744v3h-2.500M1142 749c-1 2-4 3-6 0v2" />
      <circle cx="1143" cy="752.500" r="3.600" fill="#e81123" stroke="none" />
      <path d="M1158.500 754a12 12 0 0 1 11-10.500M1161.500 755a9 9 0 0 1 8-8M1164.500 755.500a6 6 0 0 1 5-5M1167 756a3 3 0 0 1 2.500-2.500" strokeWidth="1.200" />
      <path d="M1188.500 753.500l6.500-12c1-1 2.500-.500 2 1l-6 11-2.500 1.500zM1188 748.500c-4-1.500-5.500 5.500-2 5.500 4 0 5-9 8-8 2 1-1 5 1 5 1.500 0 1-3 3.500-3" strokeWidth="1.200" />
    </svg>
    <TaskItem $w={26}><Label $ls={-0.55}>ENG</Label></TaskItem>
    <Clock>16:52<br />08-11-2024</Clock>
    <TaskItem $w={38}>
      <Bubble width="16" height="16"><path d="M0 0h16v12H7l-4 4v-4H0z" /><path d="M3 3.500h10M3 6.500h10M3 9.500h6" stroke="#d4d5d7" /></Bubble>
      <Badge $x={16} $y={18} $s={17}>6</Badge>
    </TaskItem>
  </Taskbar>
);

export default function App() {
  return (
    <Window>
      <GlobalStyle />
      <Title />
      <TabRow />
      <RibbonBar>
        <Clipboard />
        <FontGroup />
        <AlignmentGroup />
        <NumberGroup />
        <StylesGroup />
        <CellsGroup />
        <EditingGroup />
        <Collapse><svg width="9" height="6" fill="none" stroke="#555" strokeWidth="1.800"><path d="M.7 5l3.800-3.800L8.300 5" /></svg></Collapse>
      </RibbonBar>
      <FormulaBar>
        <Field $w={102}><Label $size={12.5} $ls={0}>W22</Label><svg width="7" height="7"><path d="M0 0h7L3.500 4.500z" fill="#777" /></svg></Field>
        <Slot $w={30} $h={26}><svg width="2" height="10" fill="#aaa"><path d="M0 0h2v2H0zM0 4h2v2H0zM0 8h2v2H0z" /></svg></Slot>
        <Field $w={110}>
          <svg width="96" height="20" viewBox="144 166 96 20" fill="none">
            <path d="M151 171l9 9M160 171l-9 9" stroke="#bbb" strokeWidth="1.800" />
            <path d="M187 176l4 4 8-8.500" stroke="#bbb" strokeWidth="2.500" />
            <text x="223" y="179.500" fontFamily="Liberation Serif" fontStyle="italic" fontWeight="700" fontSize="15" fill="#666">f</text>
            <text x="228" y="179.500" fontFamily="Liberation Serif" fontStyle="italic" fontWeight="700" fontSize="11" fill="#666">x</text>
          </svg>
        </Field>
        <Field $l={3} $r={3}><span /><svg width="8" height="8" fill="none" stroke="#666" strokeWidth="1.800"><path d="M.7 1L4 4.500 7.300 1" /></svg></Field>
      </FormulaBar>
      <SheetArea>
        <Sheet>
          <SheetRow>
            <Corner><svg width="5" height="5"><path d="M5 0v5H0z" fill="#b5b5b5" /></svg></Corner>
            {COLS.map((c, i) => <ColHead key={c} $w={widthOf(i)} $on={c === "W"}>{c}</ColHead>)}
          </SheetRow>
          {ROWS.map((r) => {
            const p = (PIVOTS as Record<number, [string, string, Kind]>)[r];
            const head = p && p[2] === "head";
            const total = p && p[2] === "total";
            return (
              <SheetRow key={r}>
                <RowHead $on={r === 22}>{r}</RowHead>
                <Cell $w={57} $kind={p ? p[2] : "plain"} $first>
                  {p && <CellText $ls={head ? 0.7 : total ? 0.9 : 0}>{head ? "Row Lab" : p[0]}</CellText>}
                  {head && <FilterButton><svg width="4" height="3"><path d="M0 0h4L2 2.500z" fill="#777" /></svg></FilterButton>}
                </Cell>
                <Cell $w={78} $kind={p ? p[2] : "plain"} $right={!!p && !head}>
                  {p && <CellText $ls={head ? 0.75 : total ? 0.35 : -0.65}>{p[1]}</CellText>}
                </Cell>
                {COLS.slice(2).map((c) => <Cell key={c} $w={40} $kind="plain" />)}
              </SheetRow>
            );
          })}
          <Question>
            <QuestionLine>Show the total export quantity of each product <Strong $blue>(Pivot table)</Strong></QuestionLine>
            <QuestionLine>What is the percentage of <Strong>carrots</Strong> out of total export quantity? <Strong $blue>(Pivot Chart)</Strong></QuestionLine>
          </Question>
          <Chart />
          <Selection />
          <SnipHint>Full-screen Snip</SnipHint>
        </Sheet>
        <VScroll>
          <ScrollBtn><svg width="7" height="4"><path d="M0 4h7L3.500 0z" fill="#666" /></svg></ScrollBtn>
          <VThumb />
          <Track />
          <ScrollBtn><svg width="7" height="4"><path d="M0 0h7L3.500 4z" fill="#666" /></svg></ScrollBtn>
        </VScroll>
      </SheetArea>
      <SheetTabs>
        <Slot $w={87} $h={26}><svg width="34" height="8"><path d="M4 0v8L0 4zM29 0v8l4-4z" fill="#bbb" /></svg></Slot>
        <Slot $w={13} />
        <ActiveSheet>Sheet2</ActiveSheet>
        <OtherSheet>Sheet1</OtherSheet>
        <Slot $w={592} $h={26}>
          <svg width="592" height="18" fill="none" stroke="#777" strokeWidth="1.200"><circle cx="41" cy="9" r="7.500" /><path d="M37 9h8M41 5v8" strokeWidth="1.800" /><path d="M589 4h2v2h-2zM589 8h2v2h-2zM589 12h2v2h-2z" fill="#aaa" stroke="none" /></svg>
        </Slot>
        <HScroll>
          <ScrollBtn><svg width="4" height="7"><path d="M4 0v7L0 3.500z" fill="#666" /></svg></ScrollBtn>
          <HThumb />
          <Track />
          <ScrollBtn><svg width="4" height="7"><path d="M0 0v7l4-3.500z" fill="#666" /></svg></ScrollBtn>
        </HScroll>
      </SheetTabs>
      <StatusBar>
        <StatusText>Select destination and press ENTER or choose Paste</StatusText>
        <Slot $w={38} $h={21} $active><svg width="14" height="15" fill="none" stroke="#666"><path d="M.5.500h12v12H.500zM4.500 0v13M8.500 0v13M0 4.500h13M0 8.500h13" /></svg></Slot>
        <Slot $w={38} $h={21}><svg width="14" height="15" fill="none" stroke="#666"><path d="M.5.500h13v12H.500zM3.500 2.500h7v8h-7zM5 4.500h4M5 6.500h4M5 8.500h4" /></svg></Slot>
        <Slot $w={38} $h={21}><svg width="14" height="15" fill="none" stroke="#666"><path d="M.5.500h13v12H.500zM5.500 0v7.500M9.500 0v7.500H0" /></svg></Slot>
        <svg width="130" height="21" viewBox="1188 707 130 21"><path d="M1193 716h6v2h-6zM1307 716h8v2h-8zM1310 713h2v8h-2zM1231 711h4v11h-4z" fill="#555" /><path d="M1203 716.500h100M1253.500 714v5" stroke="#aaa" /></svg>
        <Slot $w={47} $h={21}><Label $size={10.5} $ls={-0.3} $lh={21}>62%</Label></Slot>
        <Slot $w={1} />
      </StatusBar>
      <TaskbarView />
    </Window>
  );
}
